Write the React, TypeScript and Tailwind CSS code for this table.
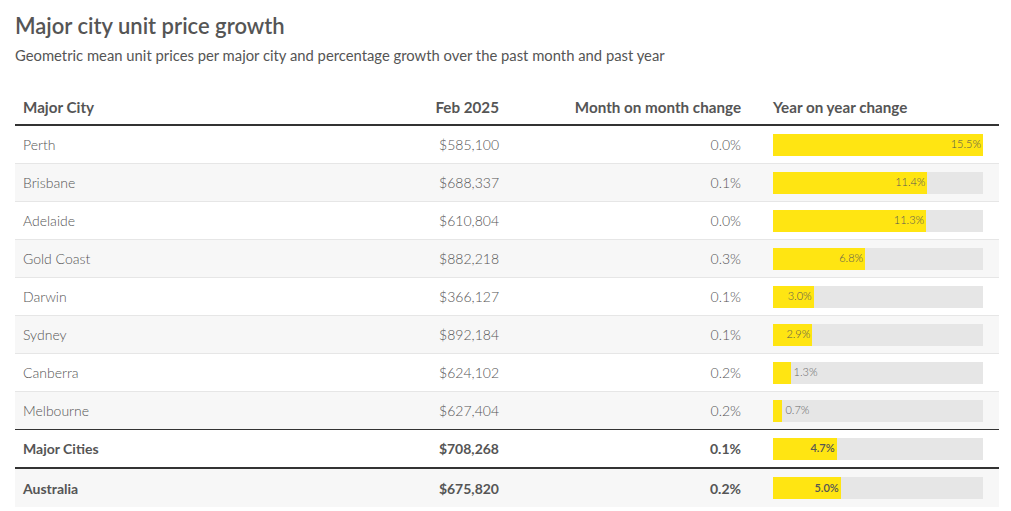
const rows = [
  { city: "Perth", price: "$585,100", mom: "0.0%", yoy: 15.5 },
  { city: "Brisbane", price: "$688,337", mom: "0.1%", yoy: 11.4 },
  { city: "Adelaide", price: "$610,804", mom: "0.0%", yoy: 11.3 },
  { city: "Gold Coast", price: "$882,218", mom: "0.3%", yoy: 6.8 },
  { city: "Darwin", price: "$366,127", mom: "0.1%", yoy: 3.0 },
  { city: "Sydney", price: "$892,184", mom: "0.1%", yoy: 2.9 },
  { city: "Canberra", price: "$624,102", mom: "0.2%", yoy: 1.3 },
  { city: "Melbourne", price: "$627,404", mom: "0.2%", yoy: 0.7 },
];

const MAX = 15.5;
const BAR_W = 210;

function Bar({ value, bold }: { value: number; bold?: boolean }) {
  const w = (value / MAX) * BAR_W;
  const inside = w > 30;
  const label = value.toFixed(1) + "%";
  return (
    <div className="flex h-[22px] w-[210px] bg-[#e6e6e6]">
      <div
        className="flex h-full shrink-0 items-center justify-end bg-[#ffe512] pr-[2px]"
        style={{ width: w }}
      >
        {inside && (
          <span className={`text-[11px] ${bold ? "font-semibold text-[#555]" : "font-light text-[#555]"}`}>{label}</span>
        )}
      </div>
      {!inside && (
        <span className="flex items-center pl-[3px] text-[11px] font-light text-[#666]">{label}</span>
      )}
    </div>
  );
}

function Row({
  city,
  price,
  mom,
  yoy,
  gray,
  bold,
  border,
  h = "h-[38px]",
}: {
  city: string;
  price: string;
  mom: string;
  yoy: number;
  gray?: boolean;
  bold?: boolean;
  border: string;
  h?: string;
}) {
  const txt = bold ? "font-bold text-[#555]" : "font-light text-[#555]";
  return (
    <div className={`grid ${h} grid-cols-[250px_242px_242px_1fr] items-center ${border} ${gray ? "bg-[#f7f7f7]" : "bg-white"}`}>
      <div className={`pl-2 text-[14px] ${txt}`}>{city}</div>
      <div className={`pr-2 text-right text-[14px] ${txt}`}>{price}</div>
      <div className={`pr-2 text-right text-[14px] ${txt}`}>{mom}</div>
      <div className="pl-6">
        <Bar value={yoy} bold={bold} />
      </div>
    </div>
  );
}

export default function App() {
  return (
    <div className="h-[511px] w-[1011px] bg-white px-[15px] pt-[11px] font-['Lato',sans-serif] text-[#555]">
      <h1 className="text-[22px] font-semibold leading-[30px] text-[#555]">Major city unit price growth</h1>
      <p className="mt-[4px] text-[14.8px] leading-[20px] text-[#555]">
        Geometric mean unit prices per major city and percentage growth over the past month and past year
      </p>
      <div className="mt-[24px] w-[984px]">
        <div className="grid h-[37px] grid-cols-[250px_242px_242px_1fr] items-center border-b-2 border-[#333] pt-[2px] text-[15.2px] font-bold text-[#555]">
          <div className="pl-2">Major City</div>
          <div className="pr-2 text-right">Feb 2025</div>
          <div className="pr-2 text-right">Month on month change</div>
          <div className="pl-6">Year on year change</div>
        </div>
        {rows.map((r, i) => (
          <Row
            key={r.city}
            {...r}
            gray={i % 2 === 1}
            border={i === rows.length - 1 ? "border-b border-[#333]" : "border-b border-[#e6e6e6]"}
          />
        ))}
        <Row city="Major Cities" price="$708,268" mom="0.1%" yoy={4.7} bold h="h-[39px]" border="border-b-2 border-[#333]" />
        <Row city="Australia" price="$675,820" mom="0.2%" yoy={5.0} bold gray border="" />
      </div>
    </div>
  );
}
